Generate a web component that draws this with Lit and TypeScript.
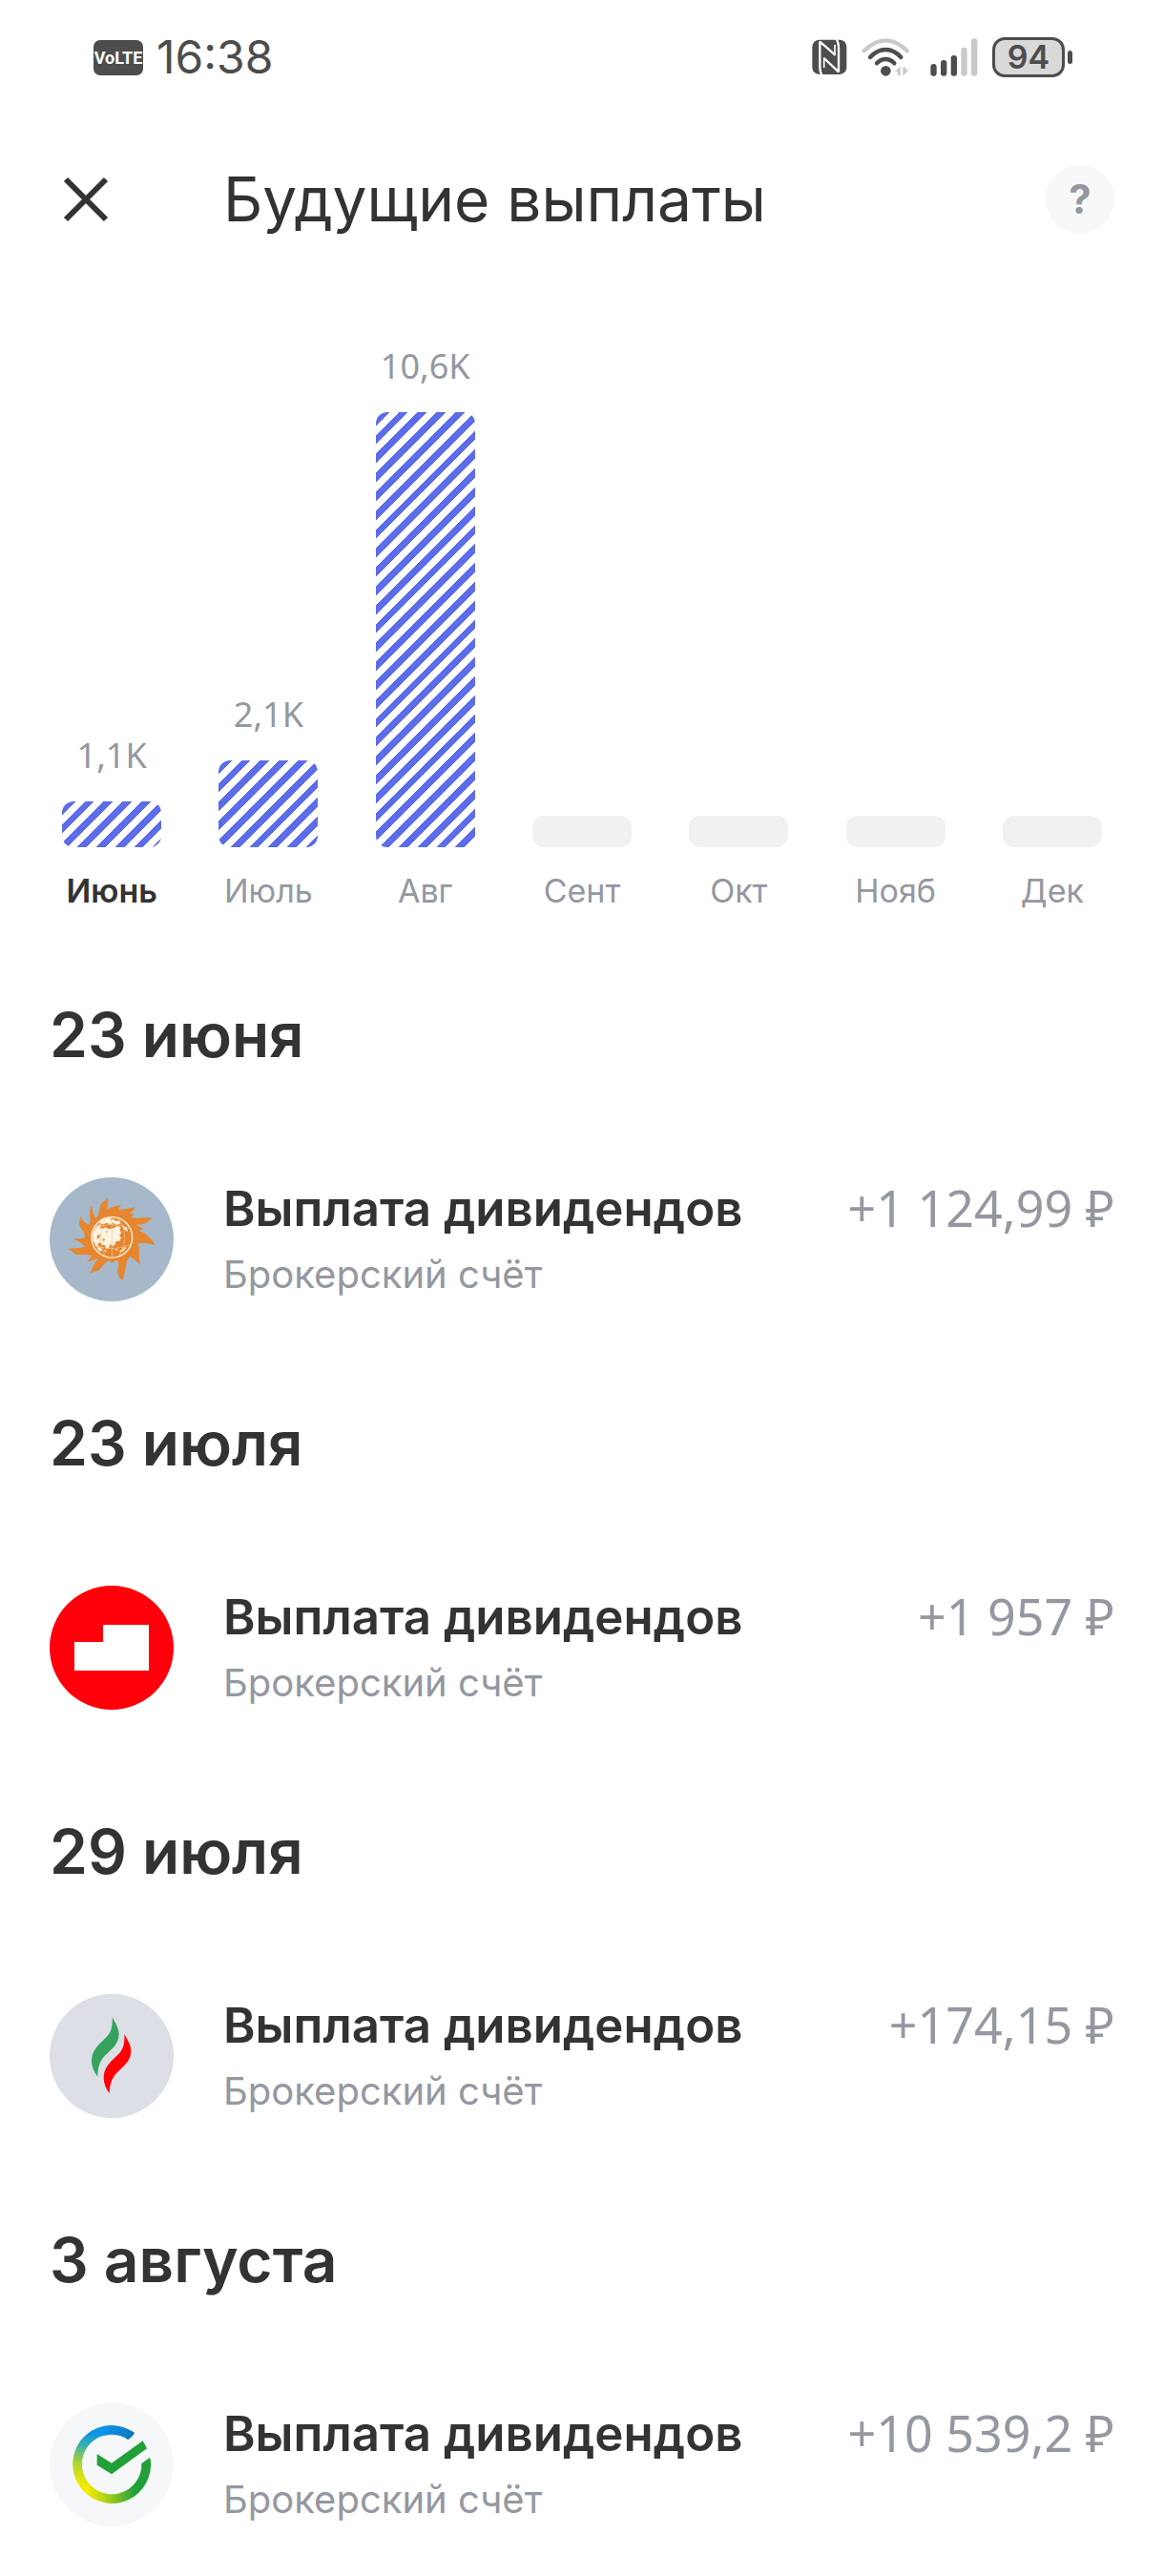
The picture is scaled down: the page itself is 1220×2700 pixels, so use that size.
import { LitElement, html, css, svg } from 'lit';
import { customElement, property } from 'lit/decorators.js';

interface Month {
  name: string;
  value?: string;
  height: number;
  current?: boolean;
}

interface Payout {
  date: string;
  logo: string;
  amount: string;
}

const MONTHS: Month[] = [
  { name: 'Июнь', value: '1,1K', height: 48, current: true },
  { name: 'Июль', value: '2,1K', height: 91 },
  { name: 'Авг', value: '10,6K', height: 456 },
  { name: 'Сент', height: 33 },
  { name: 'Окт', height: 33 },
  { name: 'Нояб', height: 33 },
  { name: 'Дек', height: 33 },
];

const PAYOUTS: Payout[] = [
  { date: '23 июня', logo: 'sun', amount: '+1 124,99 ₽' },
  { date: '23 июля', logo: 'blocks', amount: '+1 957 ₽' },
  { date: '29 июля', logo: 'flame', amount: '+174,15 ₽' },
  { date: '3 августа', logo: 'check', amount: '+10 539,2 ₽' },
];

const LOGOS: Record<string, unknown> = {
  sun: svg`
    <svg viewBox="36 42 390 390" aria-hidden="true">
      <circle cx="231" cy="237" r="195" fill="#a6b8ca" />
      <path fill="#e6862e" d="M218 105C222 118 219 130 215 144C226 136 240 134 261 129
        C255 135 254 139 252 145C270 140 285 143 304 134C302 144 293 150 287 156
        L302 157L293 167C312 174 335 166 359 170C346 178 345 186 326 190L308 191
        L331 204L315 209C337 216 352 228 369 255C350 252 334 244 312 251
        C325 269 309 290 324 319C311 307 300 298 288 291C272 309 277 338 265 366
        C252 357 246 342 252 320C254 312 252 305 248 301L229 313L230 301
        C211 302 205 326 188 335C179 340 171 337 161 343C171 332 171 320 180 309
        L190 297L154 309L168 289C151 281 132 288 121 284C110 282 109 272 94 266
        C111 265 132 267 148 259C137 253 133 244 113 237C122 233 139 236 147 231
        C148 211 132 205 129 188C127 179 134 174 134 164C139 175 144 185 162 191
        C168 175 158 159 163 144C164 138 168 135 168 128C172 142 170 160 183 170
        C192 161 191 142 197 129C201 118 213 115 218 105Z" />
      <circle cx="231" cy="231" r="74" fill="#e6862e" />
      <circle cx="232" cy="231" r="64" fill="none" stroke="#fff3e2" stroke-width="4" />
      <g fill="#fff3e2">
        <path d="M196 179C206 171 220 168 230 170L226 176L239 174L243 180L254 178L259 187
          L247 191L236 186L226 190L214 185L205 190L193 187Z" />
        <path d="M177 206C184 194 190 190 198 191L193 200L202 204L211 199L222 205L238 202
          L247 195L259 199L257 209L262 216L255 225L261 232L256 242L246 243L242 254
          L233 257L227 251L222 265L215 267L210 256L200 254L196 246L187 251L190 261
          L183 260L177 248L172 242L171 222Z" />
        <path d="M184 263L194 261L201 271L195 276Z" />
        <path d="M206 270L216 274L211 278Z" />
        <path d="M243 266L251 269L246 274Z" />
        <path d="M253 275L268 267L272 260L277 263L265 276Z" />
        <path d="M263 193L278 200L282 214L272 207Z" />
      </g>
      <g fill="none" stroke="#f8c795" stroke-width="2">
        <path d="M232 169V295" />
        <path d="M177 203Q232 177 286 203" />
        <path d="M171 252Q232 280 292 252" />
        <path d="M209 174Q184 231 209 288" />
        <path d="M255 174Q290 231 255 288" />
      </g>
      <g fill="#e6862e">
        <path d="M186 224L195 221L192 233L185 236Z" />
        <path d="M202 237L208 235L210 240L203 242Z" />
        <path d="M211 211L219 213L214 216Z" />
        <path d="M241 247L248 244L246 252Z" />
      </g>
    </svg>`,
  blocks: svg`
    <svg viewBox="36 36 390 390" aria-hidden="true">
      <circle cx="231" cy="231" r="195" fill="#ff000a" />
      <path fill="#fff" d="M204 159H348V303H114V213H204Z" />
    </svg>`,
  flame: svg`
    <svg viewBox="36 30 390 390" aria-hidden="true">
      <circle cx="231" cy="225" r="195" fill="#dcdfe6" />
      <path fill="#35a35b" d="M233 103C241 119 254 137 254 156C253 190 230 203 211 223
        C193 241 187 263 187 290C177 276 168 259 168 239C168 211 187 191 206 174
        C226 157 235 140 233 103Z" />
      <path fill="#ff0005" d="M271 155C279 172 292 189 292 209C291 242 268 256 249 276
        C231 294 225 315 224 343C214 328 206 312 206 292C206 264 225 244 244 227
        C264 210 273 193 271 155Z" />
    </svg>`,
  check: svg`
    <svg viewBox="36 24 390 390" aria-hidden="true">
      <defs>
        <linearGradient id="ring-left" gradientUnits="userSpaceOnUse" x1="200" y1="100" x2="150" y2="320">
          <stop offset="0.1" stop-color="#0d95e8" />
          <stop offset="0.3" stop-color="#35acb4" />
          <stop offset="0.55" stop-color="#a7d237" />
          <stop offset="0.85" stop-color="#f2ea06" />
        </linearGradient>
        <linearGradient id="ring-top" gradientUnits="userSpaceOnUse" x1="200" y1="100" x2="300" y2="130">
          <stop offset="0" stop-color="#0d95ee" />
          <stop offset="1" stop-color="#0b78bd" />
        </linearGradient>
        <linearGradient id="ring-bottom" gradientUnits="userSpaceOnUse" x1="155" y1="300" x2="300" y2="280">
          <stop offset="0" stop-color="#f2ea06" />
          <stop offset="0.5" stop-color="#94c81e" />
          <stop offset="1" stop-color="#21a038" />
        </linearGradient>
      </defs>
      <circle cx="231" cy="219" r="195" fill="#f5f7f8" />
      <g fill="none" stroke-width="29">
        <path stroke="url(#ring-left)" d="M200 115A108 108 0 0 0 155 295" />
        <path stroke="url(#ring-top)" d="M198 116A108 108 0 0 1 295 132" />
        <path stroke="url(#ring-bottom)" d="M154 294A108 108 0 0 0 339 206" />
      </g>
      <path fill="#f5f7f8" d="M280 144L306 123L360 120L360 190L327 216L310 200Z" />
      <path fill="#21a038" d="M327 216L351 197Q354 207 353 224L325 224Z" />
      <path fill="#21a038" d="M185 186L231 215L329 145L342 169L231 250L185 221Z" />
    </svg>`,
};

@customElement('payout-chart')
export class PayoutChart extends LitElement {
  @property({ attribute: false }) months: Month[] = [];

  static styles = css`
    :host {
      display: block;
    }

    .chart {
      display: grid;
      grid-template-columns: repeat(7, 1fr);
      align-items: end;
      margin: 0;
      padding: 62px 35px 0;
      list-style: none;
    }

    .month {
      display: flex;
      flex-direction: column;
      align-items: center;
      color: #9498a1;
      font-size: 34px;
      line-height: 48px;
    }

    .value {
      margin-bottom: 24px;
      font-family: 'Noto Sans', sans-serif;
      font-size: 36px;
    }

    .bar {
      width: 104px;
      border-radius: 12px;
      background: #eff1f3;
    }

    .bar.filled {
      background: repeating-linear-gradient(135deg, #fff 0 3px, #5c6cea 3px 10px, #fff 10px 14px);
    }

    .name {
      margin-top: 22px;
    }

    .name.current {
      color: #333;
      font-weight: 600;
    }
  `;

  render() {
    return html`
      <ul class="chart">
        ${this.months.map(
          (m) => html`
            <li class="month">
              ${m.value ? html`<span class="value">${m.value}</span>` : ''}
              <div class="bar ${m.value ? 'filled' : ''}" style="height: ${m.height}px"></div>
              <span class="name ${m.current ? 'current' : ''}">${m.name}</span>
            </li>
          `
        )}
      </ul>
    `;
  }
}

@customElement('status-bar')
export class StatusBar extends LitElement {
  static styles = css`
    :host {
      display: flex;
      align-items: center;
      justify-content: space-between;
      height: 120px;
      padding: 0 96px 0 98px;
      color: #4d4d4d;
    }

    .side {
      display: flex;
      align-items: center;
    }

    .volte {
      width: 52px;
      height: 37px;
      border-radius: 7px;
      background: #4d4d4d;
      color: #fff;
      font: 700 18px/37px Roboto, sans-serif;
      text-align: center;
    }

    .time {
      margin-left: 14px;
      font-size: 48px;
      line-height: 60px;
    }

    .nfc {
      margin-right: 15px;
    }

    .wifi {
      margin-right: 22px;
    }

    .signal {
      margin-right: 15px;
    }

    .battery {
      box-sizing: border-box;
      width: 76px;
      height: 42px;
      border: 3px solid #4d4d4d;
      border-radius: 13px;
      background: #d9d9d9;
      font-size: 34px;
      font-weight: 600;
      line-height: 36px;
      text-align: center;
    }

    .nub {
      width: 5px;
      height: 14px;
      margin-left: 3px;
      border-radius: 3px;
      background: #4d4d4d;
    }
  `;

  render() {
    return html`
      <div class="side">
        <span class="volte">VoLTE</span>
        <span class="time">16:38</span>
      </div>
      <div class="side">
        <svg class="nfc" width="37" height="38" viewBox="89 60 111 114" aria-hidden="true">
          <rect x="90" y="62" width="108" height="109" rx="22" fill="#4d4d4d" />
          <path fill="none" stroke="#fff" stroke-width="7" stroke-linejoin="bevel"
            d="M121 175Q114 165 114 147V68L162 110" />
          <path fill="none" stroke="#fff" stroke-width="7" stroke-linejoin="bevel"
            d="M127 120L173 163V90Q173 70 165 58" />
          <path fill="none" stroke="#fff" stroke-width="5" d="M127 118V150" />
          <path fill="none" stroke="#fff" stroke-width="5" d="M161 78V112" />
        </svg>
        <svg class="wifi" width="50" height="40" viewBox="244 57 150 120" aria-hidden="true">
          <g fill="none" stroke-linecap="round" stroke-width="13">
            <path stroke="#c9c9c9" d="M252 97Q285 64 320 64Q354 64 387 97" />
            <path stroke="#4d4d4d" d="M271 117Q293 93 320 93Q346 93 368 117" />
            <path stroke="#4d4d4d" d="M292 136Q304 123 320 123Q335 123 347 136" />
          </g>
          <circle cx="320" cy="160" r="16" fill="#4d4d4d" />
          <path fill="#c9c9c9" d="M348 162L366 146V174H357V162ZM374 148H382V155H393L376 174H374Z" />
        </svg>
        <svg class="signal" width="50" height="40" viewBox="464 57 150 120" aria-hidden="true">
          <g fill="#4d4d4d">
            <rect x="465" y="138" width="19" height="38" rx="9" />
            <rect x="497" y="126" width="19" height="50" rx="9" />
            <rect x="529" y="111" width="19" height="65" rx="9" />
          </g>
          <g fill="#c9c9c9">
            <rect x="561" y="86" width="19" height="90" rx="9" />
            <rect x="593" y="58" width="19" height="118" rx="9" />
          </g>
        </svg>
        <span class="battery">94</span>
        <span class="nub"></span>
      </div>
    `;
  }
}

@customElement('app-root')
export class AppRoot extends LitElement {
  static styles = css`
    :host {
      display: block;
      min-height: 100vh;
      background: #fff;
      color: #333;
      font-family: Inter, 'Noto Sans', sans-serif;
    }

    button {
      display: grid;
      place-items: center;
      padding: 0;
      border: 0;
      background: none;
      font: inherit;
      cursor: pointer;
    }

    .header {
      display: flex;
      align-items: center;
      height: 178px;
      padding: 0 52px 0 50px;
    }

    .close {
      width: 80px;
      height: 80px;
    }

    .title {
      flex: 1;
      margin: 0 0 0 104px;
      font-size: 64px;
      font-weight: 400;
      line-height: 80px;
    }

    .help {
      width: 72px;
      height: 72px;
      border-radius: 50%;
      background: #f6f8f9;
      color: #9498a1;
      font-size: 42px;
      font-weight: 700;
      line-height: 56px;
    }

    .payouts {
      display: flex;
      flex-direction: column;
      gap: 109px;
      padding: 87px 52px 52px;
    }

    .date {
      margin: 0 0 109px;
      font-size: 64px;
      font-weight: 600;
      line-height: 80px;
    }

    .row {
      display: flex;
      align-items: flex-start;
    }

    .logo {
      flex: none;
      width: 130px;
      height: 130px;
      margin-right: 52px;
    }

    .logo svg {
      display: block;
    }

    .text {
      flex: 1;
    }

    .name,
    .account {
      margin: 0;
    }

    .name {
      margin-bottom: 8px;
      font-size: 51px;
      font-weight: 600;
      line-height: 66px;
    }

    .amount {
      font-family: 'Noto Sans', sans-serif;
      font-size: 52px;
      line-height: 64px;
    }

    .account {
      font-size: 40px;
      line-height: 56px;
    }

    .account,
    .amount {
      color: #9498a1;
    }
  `;

  render() {
    return html`
      <status-bar></status-bar>
      <header class="header">
        <button class="close" aria-label="Закрыть">
          <svg width="48" height="48" viewBox="0 0 48 48" aria-hidden="true">
            <path d="M3 3L45 45M45 3L3 45" stroke="#333" stroke-width="6" />
          </svg>
        </button>
        <h1 class="title">Будущие выплаты</h1>
        <button class="help">?</button>
      </header>
      <payout-chart .months=${MONTHS}></payout-chart>
      <main class="payouts">
        ${PAYOUTS.map(
          (p) => html`
            <section>
              <h2 class="date">${p.date}</h2>
              <div class="row">
                <div class="logo">${LOGOS[p.logo]}</div>
                <div class="text">
                  <p class="name">Выплата дивидендов</p>
                  <p class="account">Брокерский счёт</p>
                </div>
                <span class="amount">${p.amount}</span>
              </div>
            </section>
          `
        )}
      </main>
    `;
  }
}
